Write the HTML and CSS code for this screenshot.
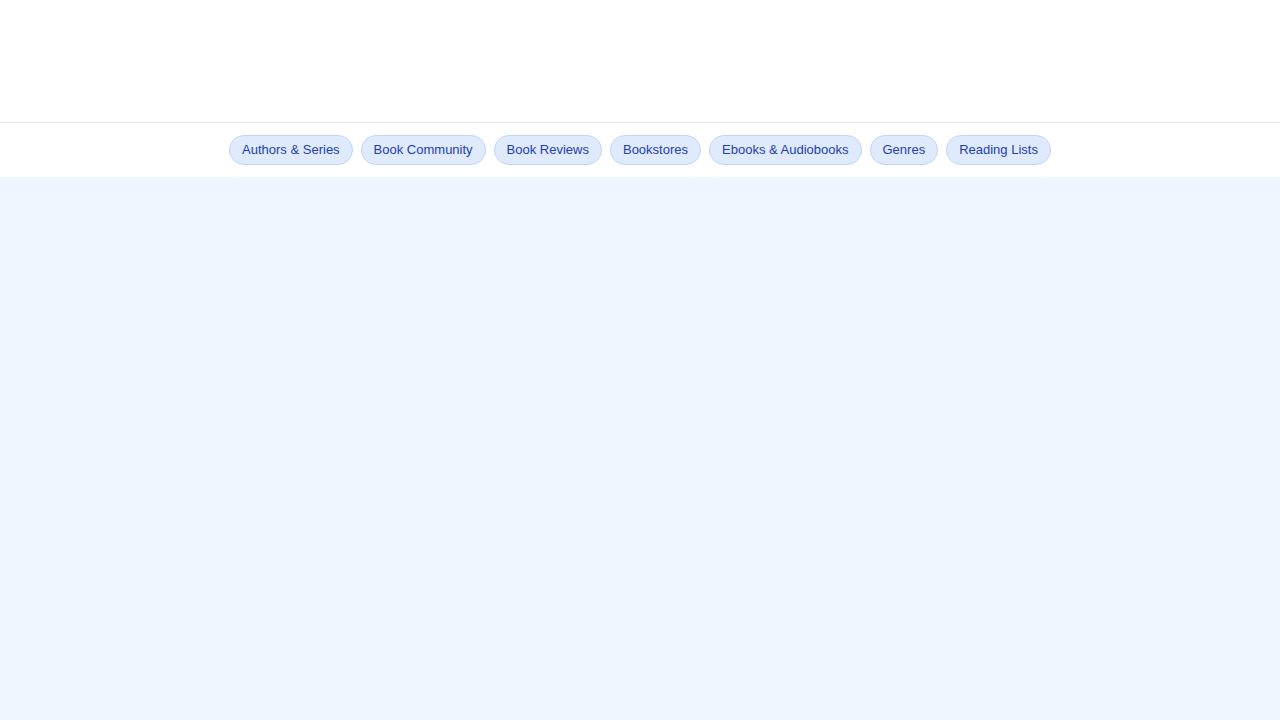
FILE: index.html
```html
<!DOCTYPE html>
<html lang="en">
<head>
  <meta charset="UTF-8" />
  <meta name="viewport" content="width=device-width, initial-scale=1.0"/>
  <title>Books</title>
  <link rel="stylesheet" href="styles.css">
</head>
<body>
  <header class="header"></header>
  <nav class="topics">
    <a class="pill" href="#">Authors &amp; Series</a>
    <a class="pill" href="#">Book Community</a>
    <a class="pill" href="#">Book Reviews</a>
    <a class="pill" href="#">Bookstores</a>
    <a class="pill" href="#">Ebooks &amp; Audiobooks</a>
    <a class="pill" href="#">Genres</a>
    <a class="pill" href="#">Reading Lists</a>
  </nav>
  <main class="content"></main>
</body>
</html>
```

FILE: styles.css
```css
html, body {
  height: 100%;
}
body {
  margin: 0;
  font-family: "Liberation Sans", Arial, sans-serif;
  background: #eff6ff;
  display: flex;
  flex-direction: column;
}
.header {
  height: 122px;
  background: white;
  border-bottom: 1px solid #e5e7eb;
}
.topics {
  background: white;
  display: flex;
  justify-content: center;
  gap: 8px;
  padding: 12px 0;
}
.pill {
  display: block;
  height: 28px;
  line-height: 28px;
  padding: 0 12px;
  font-size: 13px;
  color: #1e40af;
  text-decoration: none;
  background: #dfeafd;
  border: 1px solid #bfd6fb;
  border-radius: 999px;
}
.content {
  flex: 1;
}
```
